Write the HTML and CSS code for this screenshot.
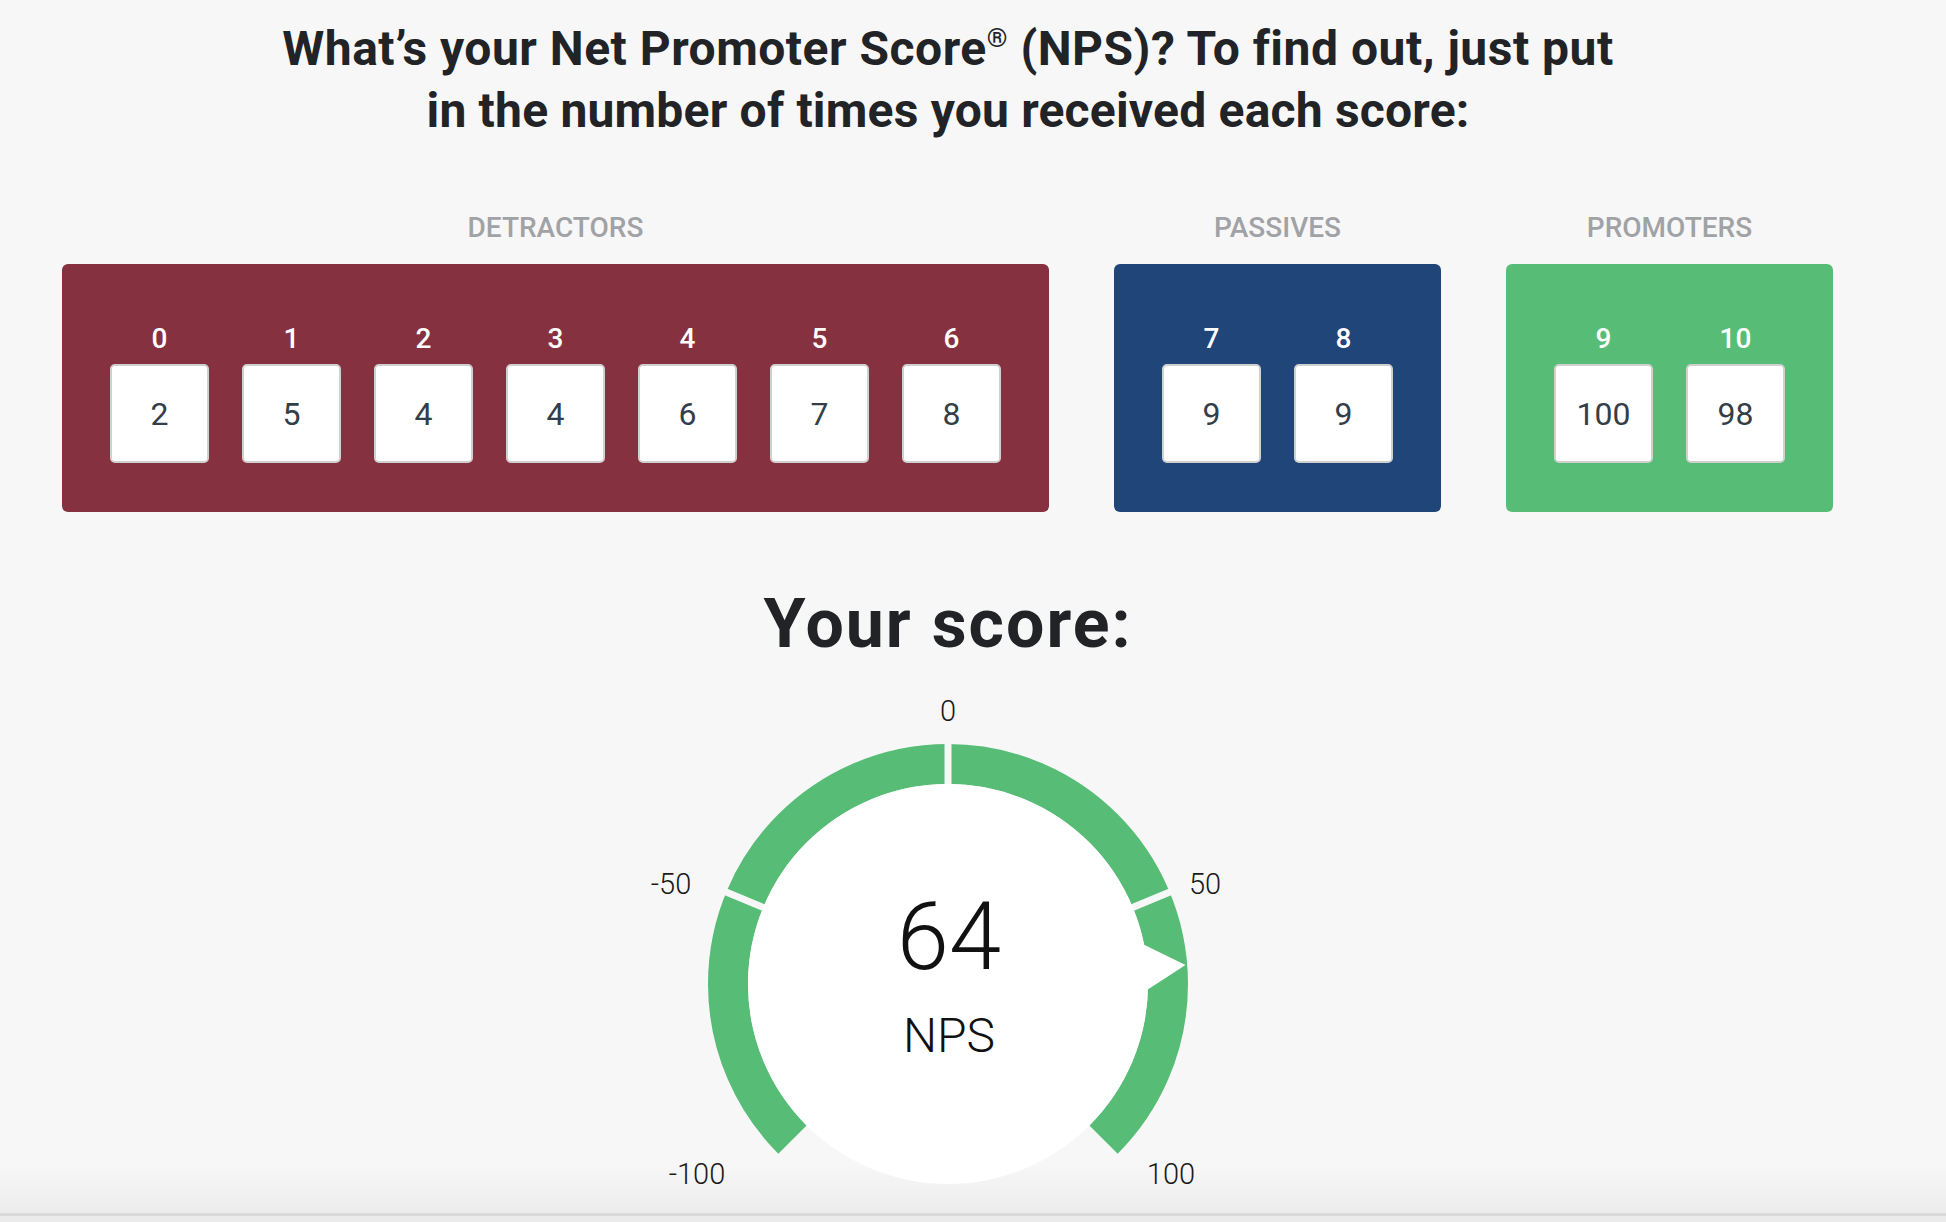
FILE: index.html
```html
<!DOCTYPE html>
<html lang="en">
<head>
<meta charset="UTF-8">
<meta name="viewport" content="width=device-width, initial-scale=1.0">
<title>NPS Calculator</title>
<link rel="stylesheet" href="styles.css">
</head>
<body>

<main class="page">
    <h1 class="intro"><span class="intro-line">What’s your Net Promoter Score<span class="reg">®</span> (NPS)? To find out, just put</span><br>in the number of times you received each score:</h1>

    <div class="groups">
        <section class="group">
            <h2 class="group-title">DETRACTORS</h2>
            <div class="group-box detractors">
                <div class="score-col"><span class="score-num">0</span><input class="score-input" type="text" value="2"></div>
                <div class="score-col"><span class="score-num">1</span><input class="score-input" type="text" value="5"></div>
                <div class="score-col"><span class="score-num">2</span><input class="score-input" type="text" value="4"></div>
                <div class="score-col"><span class="score-num">3</span><input class="score-input" type="text" value="4"></div>
                <div class="score-col"><span class="score-num">4</span><input class="score-input" type="text" value="6"></div>
                <div class="score-col"><span class="score-num">5</span><input class="score-input" type="text" value="7"></div>
                <div class="score-col"><span class="score-num">6</span><input class="score-input" type="text" value="8"></div>
            </div>
        </section>

        <section class="group">
            <h2 class="group-title">PASSIVES</h2>
            <div class="group-box passives">
                <div class="score-col"><span class="score-num">7</span><input class="score-input" type="text" value="9"></div>
                <div class="score-col"><span class="score-num">8</span><input class="score-input" type="text" value="9"></div>
            </div>
        </section>

        <section class="group">
            <h2 class="group-title">PROMOTERS</h2>
            <div class="group-box promoters">
                <div class="score-col"><span class="score-num">9</span><input class="score-input" type="text" value="100"></div>
                <div class="score-col"><span class="score-num">10</span><input class="score-input" type="text" value="98"></div>
            </div>
        </section>
    </div>

    <h2 class="result-title">Your score:</h2>

    <svg class="gauge" width="700" height="510" viewBox="0 0 700 510">
        <!-- ring: -100 .. 100 maps to -135deg .. 135deg -->
        <path class="gauge-ring" d="M 194.44 449.56 A 220 220 0 1 1 505.56 449.56"/>
        <line class="gauge-tick" x1="350" y1="104" x2="350" y2="46"/>
        <line class="gauge-tick" x1="174.5" y1="221.3" x2="120.9" y2="199.1"/>
        <line class="gauge-tick" x1="525.5" y1="221.3" x2="579.1" y2="199.1"/>
        <circle class="gauge-face" cx="350" cy="294" r="200"/>
        <polygon class="gauge-pointer" points="545.6,254.6 587.5,275 549.8,299.6 540,280"/>

        <text class="gauge-label" x="350" y="31">0</text>
        <text class="gauge-label" x="73" y="204">-50</text>
        <text class="gauge-label" x="607" y="204">50</text>
        <text class="gauge-label" x="99" y="494">-100</text>
        <text class="gauge-label" x="573" y="494">100</text>

        <text class="gauge-value" x="351" y="279">64</text>
        <text class="gauge-unit" x="351" y="362">NPS</text>
    </svg>
</main>

</body>
</html>
```

FILE: styles.css
```css
html, body {
    margin: 0;
    padding: 0;
}
body {
    min-height: 100vh;
    font-family: Roboto, 'Liberation Sans', sans-serif;
    color: #222326;
    background: linear-gradient(to bottom, #f7f7f7 0, #f7f7f7 1165px, #ececec 1213px, #dadada 1213px, #dadada 1216px, #ebebeb 1216px);
}
.page {
    width: 1896px;
    display: flex;
    flex-direction: column;
    align-items: center;
}
.intro {
    margin: 18px 0 0;
    font-size: 48px;
    line-height: 62px;
    font-weight: 700;
    letter-spacing: 0.2px;
    text-align: center;
    color: #222326;
}
.intro-line {
    letter-spacing: 0.5px;
}
.reg {
    font-size: 0.55em;
    font-weight: 500;
    vertical-align: 0.7em;
    line-height: 0;
}
.groups {
    display: flex;
    gap: 65px;
    margin-top: 69px;
    align-self: flex-start;
    padding-left: 62px;
}
.group {
    display: flex;
    flex-direction: column;
    align-items: center;
}
.group-title {
    margin: 0 0 19px;
    font-size: 28px;
    line-height: 34px;
    font-weight: 500;
    color: #a0a2a6;
}
.group-box {
    display: flex;
    gap: 33px;
    padding: 58px 48px 49px;
    border-radius: 6px;
}
.detractors {
    background-color: #863140;
}
.passives {
    background-color: #1f4579;
}
.promoters {
    background-color: #57bd76;
}
.score-col {
    display: flex;
    flex-direction: column;
    align-items: center;
    gap: 8px;
}
.score-num {
    font-size: 28px;
    line-height: 34px;
    font-weight: 500;
    color: #fff;
}
.score-input {
    width: 99px;
    height: 99px;
    box-sizing: border-box;
    padding: 0;
    border: 2px solid #d0d0d0;
    border-radius: 5px;
    background: #fff;
    font-family: Roboto, 'Liberation Sans', sans-serif;
    font-size: 32px;
    color: #333e48;
    text-align: center;
    outline: none;
}
.result-title {
    margin: 72px 0 0;
    font-size: 68px;
    line-height: 80px;
    font-weight: 700;
    letter-spacing: 2px;
    color: #222326;
}
.gauge {
    display: block;
    margin-top: 26px;
}
.gauge-ring {
    fill: none;
    stroke: #57bd76;
    stroke-width: 40;
}
.gauge-tick {
    stroke: #f7f7f7;
    stroke-width: 7;
}
.gauge-face,
.gauge-pointer {
    fill: #fff;
}
.gauge-label {
    font-family: Roboto, 'Liberation Sans', sans-serif;
    font-size: 29px;
    font-weight: 300;
    fill: #1a1a1a;
    text-anchor: middle;
}
.gauge-value {
    font-family: Roboto, 'Liberation Sans', sans-serif;
    font-size: 94px;
    font-weight: 300;
    fill: #111;
    text-anchor: middle;
}
.gauge-unit {
    font-family: Roboto, 'Liberation Sans', sans-serif;
    font-size: 48px;
    font-weight: 300;
    fill: #111;
    text-anchor: middle;
}
```
